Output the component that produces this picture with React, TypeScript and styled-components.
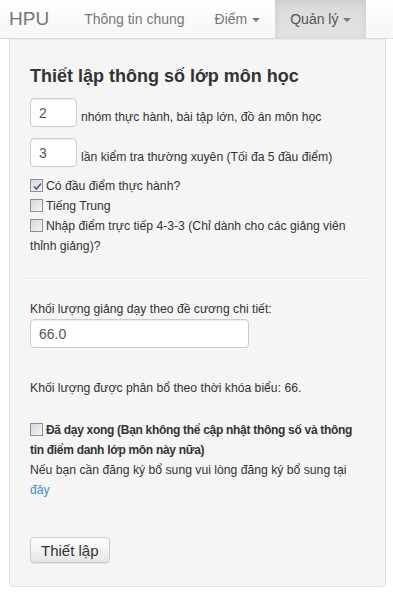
import styled, { createGlobalStyle } from "styled-components"

const GlobalStyle = createGlobalStyle`
  html, body {
    margin: 0;
    padding: 0;
    background: #fff;
  }
  body {
    font-family: "Liberation Sans", Arial, sans-serif;
    font-size: 12.2px;
    line-height: 20px;
    color: #333;
  }
  * {
    box-sizing: border-box;
  }
`

const Navbar = styled.nav`
  height: 39px;
  display: flex;
  align-items: stretch;
  background: linear-gradient(to bottom, #fff 0%, #f6f6f6 100%);
  border-bottom: 1px solid #dcdcdc;
`

const Brand = styled.a`
  display: flex;
  align-items: center;
  padding: 0 9px;
  font-size: 19px;
  color: #777;
  margin-right: 11px;
`

const NavItem = styled.a<{ $active?: boolean }>`
  display: flex;
  align-items: center;
  gap: 5px;
  padding: 0 15px;
  font-size: 14px;
  color: ${(p) => (p.$active ? "#555" : "#777")};
  background: ${(p) =>
    p.$active ? "linear-gradient(to bottom, #dbdbdb 0%, #e2e2e2 100%)" : "transparent"};
  box-shadow: ${(p) => (p.$active ? "inset 0 3px 9px rgba(0, 0, 0, 0.075)" : "none")};
`

const Caret = styled.span`
  display: inline-block;
  width: 0;
  height: 0;
  border-top: 4px solid #777;
  border-left: 4px solid transparent;
  border-right: 4px solid transparent;
  margin-top: 2px;
`

const Well = styled.div`
  margin: 0 7px 0 9px;
  padding: 20px 20px 23px;
  background: #f5f5f5;
  border: 1px solid #e3e3e3;
  border-top: none;
  border-radius: 0 0 4px 4px;
  box-shadow: inset 0 1px 1px rgba(0, 0, 0, 0.05);
`

const Title = styled.h3`
  margin: 4px 0 9px;
  font-size: 18px;
  line-height: 26px;
  font-weight: bold;
  color: #333;
`

const InputRow = styled.div`
  display: flex;
  align-items: flex-end;
  gap: 4px;
  margin-bottom: 11px;
`

const TextInput = styled.div<{ $width: number }>`
  width: ${(p) => p.$width}px;
  height: 29px;
  padding: 0 8px;
  display: flex;
  align-items: center;
  font-size: 14px;
  background: #fff;
  border: 1px solid #ccc;
  border-radius: 4px;
  box-shadow: inset 0 1px 1px rgba(0, 0, 0, 0.075);
  color: #555;
`

const Checks = styled.div`
  margin-top: -2px;
`

const CheckLine = styled.div<{ $bold?: boolean }>`
  font-weight: ${(p) => (p.$bold ? "bold" : "normal")};
  font-size: ${(p) => (p.$bold ? "12px" : "inherit")};
  letter-spacing: ${(p) => (p.$bold ? "-0.3px" : "normal")};
`

const Box = styled.span`
  display: inline-block;
  width: 13px;
  height: 13px;
  margin-right: 3px;
  vertical-align: -2px;
  border: 1px solid #8f8f8f;
  background: linear-gradient(to bottom right, #d8d8d8 0%, #f4f4f4 100%);
  position: relative;
  svg {
    position: absolute;
    left: 1px;
    top: 1px;
  }
`

const Divider = styled.hr`
  margin: 22px -2px 19px -5px;
  border: 0;
  border-top: 1px solid #e6e6e6;
  border-bottom: 1px solid #fff;
`

const FieldLabel = styled.div`
  margin-bottom: 0;
`

const Paragraph = styled.p`
  margin: 30px 0 0;
`

const Block = styled.div`
  margin-top: 22px;
`

const Link = styled.a`
  color: #428bca;
  text-decoration: none;
`

const Button = styled.button`
  margin-top: 37px;
  height: 26px;
  padding: 0 10px;
  font-family: "Liberation Sans", Arial, sans-serif;
  font-size: 15px;
  color: #333;
  background: linear-gradient(to bottom, #fff 0%, #e6e6e6 100%);
  border: 1px solid #ccc;
  border-radius: 4px;
  box-shadow: inset 0 1px 0 rgba(255, 255, 255, 0.15), 0 1px 1px rgba(0, 0, 0, 0.075);
`

const CheckBox = ({ checked }: { checked?: boolean }) => (
  <Box>
    {checked && (
      <svg width="11" height="11" viewBox="0 0 11 11">
        <path d="M2 5.5 L4.3 8 L9 2.5" fill="none" stroke="#4a5d92" strokeWidth="1.7" />
      </svg>
    )}
  </Box>
)

const App = () => {
  return (
    <>
      <GlobalStyle />
      <Navbar>
        <Brand>HPU</Brand>
        <NavItem>Thông tin chung</NavItem>
        <NavItem>
          Điểm <Caret />
        </NavItem>
        <NavItem $active>
          Quản lý <Caret />
        </NavItem>
      </Navbar>
      <Well>
        <Title>Thiết lập thông số lớp môn học</Title>
        <InputRow>
          <TextInput $width={47}>2</TextInput>
          <span>nhóm thực hành, bài tập lớn, đồ án môn học</span>
        </InputRow>
        <InputRow>
          <TextInput $width={47}>3</TextInput>
          <span>lần kiểm tra thường xuyên (Tối đa 5 đầu điểm)</span>
        </InputRow>
        <Checks>
          <CheckLine>
            <CheckBox checked />
            Có đầu điểm thực hành?
          </CheckLine>
          <CheckLine>
            <CheckBox />
            Tiếng Trung
          </CheckLine>
          <CheckLine>
            <CheckBox />
            Nhập điểm trực tiếp 4-3-3 (Chỉ dành cho các giảng viên thỉnh giảng)?
          </CheckLine>
        </Checks>
        <Divider />
        <FieldLabel>Khối lượng giảng dạy theo đề cương chi tiết:</FieldLabel>
        <TextInput $width={219}>66.0</TextInput>
        <Paragraph>Khối lượng được phân bổ theo thời khóa biểu: 66.</Paragraph>
        <Block>
          <CheckLine $bold>
            <CheckBox />
            Đã dạy xong (Bạn không thể cập nhật thông số và thông tin điểm danh lớp môn này nữa)
          </CheckLine>
          <div>
            Nếu bạn cần đăng ký bổ sung vui lòng đăng ký bổ sung tại <Link>đây</Link>
          </div>
        </Block>
        <Button>Thiết lập</Button>
      </Well>
    </>
  )
}

export default App
